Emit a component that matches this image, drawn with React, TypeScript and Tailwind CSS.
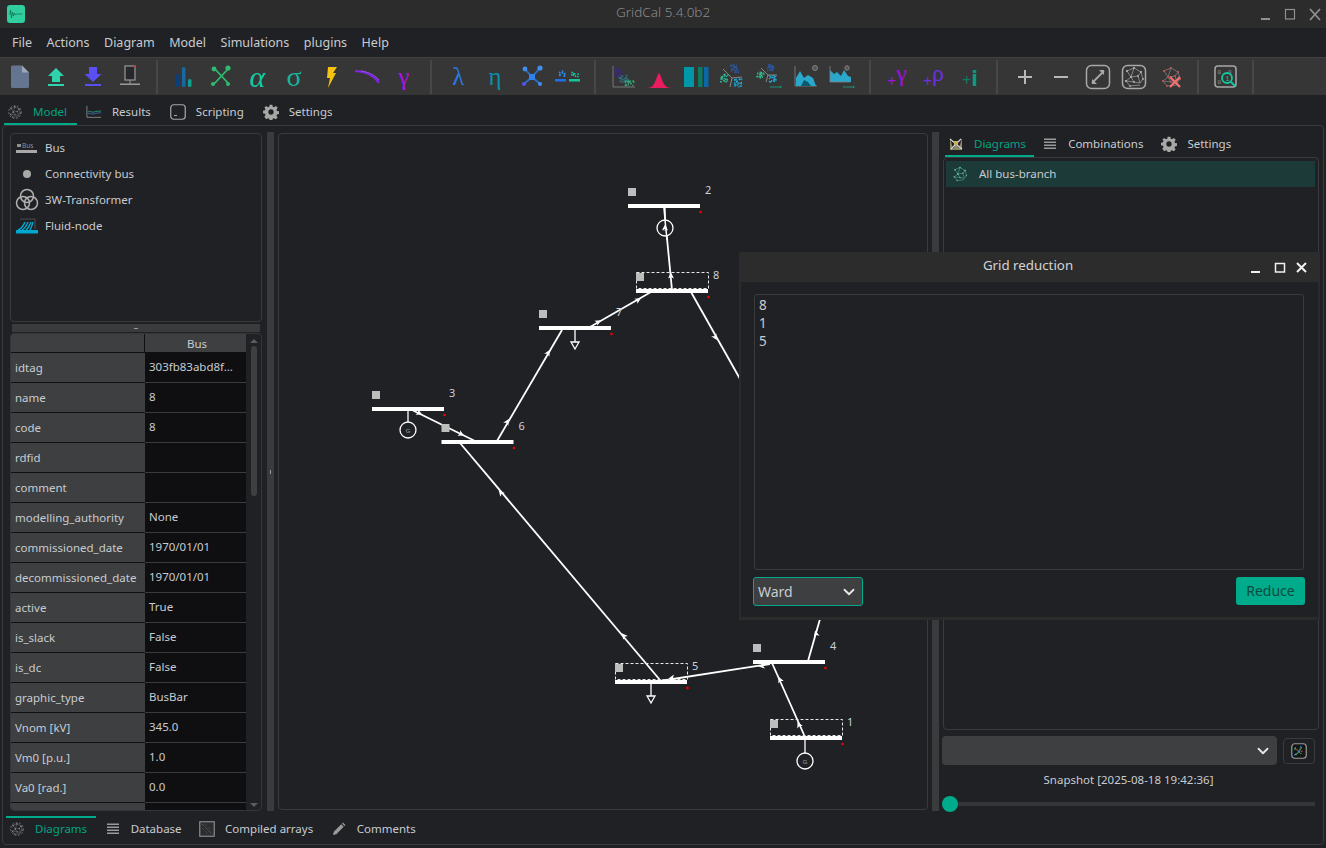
import type { ReactNode } from 'react'
import { ChevronDown } from 'lucide-react'

const TEAL = '#00ab8b'

// deterministic speckle so the scatter icons stay the same between runs
function speck(n: number, x: number, y: number, w: number, h: number, seed: number) {
  const out: [number, number][] = []
  let s = seed
  for (let i = 0; i < n; i++) {
    s = (s * 9301 + 49297) % 233280
    const a = s / 233280
    s = (s * 9301 + 49297) % 233280
    const b = s / 233280
    out.push([x + a * w, y + b * h])
  }
  return out
}

function Speck({ n, x, y, w, h, seed, color, r = 0.7 }: { n: number; x: number; y: number; w: number; h: number; seed: number; color: string; r?: number }) {
  return (
    <g fill={color}>
      {speck(n, x, y, w, h, seed).map(([a, b], i) => (
        <circle key={i} cx={a} cy={b} r={r} />
      ))}
    </g>
  )
}

function Ico({ children, size = 28 }: { children: ReactNode; size?: number }) {
  return (
    <svg width={size} height={size} viewBox="0 0 28 28" fill="none" aria-hidden="true">
      {children}
    </svg>
  )
}

const NET: [number, number, number, number][] = [
  [7, 8, 14, 5], [14, 5, 21, 9], [7, 8, 11, 14], [11, 14, 18, 13], [21, 9, 18, 13],
  [21, 9, 23, 16], [18, 13, 20, 20], [11, 14, 6, 18], [6, 18, 10, 23], [10, 23, 20, 22], [23, 16, 20, 20],
  [14, 5, 11, 14], [11, 14, 14, 19], [14, 19, 20, 20], [6, 18, 14, 19],
]

function Net({ color, dot }: { color: string; dot?: string }) {
  return (
    <g>
      {NET.map(([a, b, c, d], i) => (
        <line key={i} x1={a} y1={b} x2={c} y2={d} stroke={color} strokeWidth={0.7} />
      ))}
      {NET.map(([a, b], i) => (
        <circle key={i} cx={a} cy={b} r={1} fill={dot ?? color} />
      ))}
    </g>
  )
}

function Greek({ ch, color, size = 25, italic }: { ch: string; color: string; size?: number; italic?: boolean }) {
  return (
    <span className={`font-['Liberation_Serif',serif] leading-none ${italic ? 'italic' : ''}`} style={{ color, fontSize: size }}>
      {ch}
    </span>
  )
}

function PlusGreek({ ch, color }: { ch: string; color: string }) {
  return (
    <span className="flex items-end leading-none" style={{ color }}>
      <span className="text-[16px] font-['Noto_Sans',sans-serif] leading-none">+</span>
      <span className="text-[24px] font-['Liberation_Serif',serif] leading-none -mt-1 mb-[4px]">{ch}</span>
    </span>
  )
}

const FILE_ICONS: ReactNode[] = [
  <Ico key="new"><path d="M5 4a1.5 1.5 0 0 1 1.5-1.5H16l7 7v14a1.5 1.5 0 0 1-1.5 1.5h-15A1.5 1.5 0 0 1 5 24z" fill="#66758f" /><path d="M16 2.500v7h7z" fill="#9aa6ba" /></Ico>,
  <Ico key="open"><path d="M14 5l8 8h-4v6h-8v-6H6z" fill="#2fd3ab" /><rect x="6" y="21" width="16" height="2" fill="#2fd3ab" /></Ico>,
  <Ico key="save"><path d="M10 4h8v7h4.500L14 19 5.500 11H10z" fill="#5a4ff2" /><rect x="6" y="21" width="16" height="2" fill="#5a4ff2" /></Ico>,
  <Ico key="device"><rect x="9" y="3" width="10" height="14" fill="#26282b" stroke="#9a9a9a" strokeWidth="1.200" /><circle cx="18.500" cy="3.500" r="0.800" fill="#e02020" /><line x1="14" y1="17" x2="14" y2="21" stroke="#9a9a9a" /><rect x="4" y="20.500" width="20" height="1.500" fill="#9a9a9a" /></Ico>,
]

const SIM_ICONS: ReactNode[] = [
  <Ico key="bars"><rect x="6" y="11" width="3.500" height="13" rx="1.500" fill="#0c3f78" /><rect x="12" y="4" width="3.500" height="20" rx="1.500" fill="#1769a3" /><rect x="18" y="16" width="3.500" height="8" rx="1.500" fill="#0d9f92" /></Ico>,
  <Ico key="x"><path d="M7 5l14 15M21 6L7 21" stroke="#2fbc72" strokeWidth="1.800" /><circle cx="7" cy="6" r="2.400" fill="#2fbc72" /><circle cx="21" cy="5" r="2.600" fill="#2fbc72" /><circle cx="6" cy="21" r="2" fill="#2fbc72" /><circle cx="21" cy="21" r="2" fill="#2fbc72" /></Ico>,
  <Greek key="a" ch="α" color="#11cba6" size={30} italic />,
  <Greek key="s" ch="σ" color="#19b39b" size={28} />,
  <Ico key="bolt"><path d="M11 4h9l-4 6h3L11 25l2-10h-3z" fill="#f5c211" /></Ico>,
  <Ico key="curve"><path d="M2 8c10 0 18 4 24 12" stroke="#8d1fe6" strokeWidth="1.800" /><path d="M4 8c9 1 17 5 22 10" stroke="#6b2fe0" strokeWidth="1.200" /><path d="M8 8c8 1 15 5 18 9" stroke="#a04be8" strokeWidth="1" /></Ico>,
  <Greek key="g" ch="γ" color="#b112e4" />,
]

const GREEK_ICONS: ReactNode[] = [
  <Greek key="l" ch="λ" color="#2a78e4" />,
  <Greek key="e" ch="η" color="#0a8eab" />,
  <Ico key="blue"><path d="M7 6l7 8 8-9M14 14l-8 7M14 14l8 7" stroke="#2a70c8" strokeWidth="1.800" /><circle cx="7" cy="6" r="2.400" fill="#3f8ff0" /><circle cx="22" cy="5" r="2.600" fill="#3f8ff0" /><circle cx="6" cy="21" r="2" fill="#5a50f0" /><circle cx="22" cy="21" r="2" fill="#3f8ff0" /><rect x="11" y="11" width="6" height="6" fill="#2f80e8" /></Ico>,
  <Ico key="dots"><rect x="1" y="16" width="11" height="2.500" fill="#1f6fe8" /><rect x="15" y="16" width="11" height="2.500" fill="#14c79a" /><Speck n={9} x={3} y={8} w={8} h={7} seed={3} color="#2f8df0" r={0.9} /><Speck n={8} x={16} y={8} w={9} h={7} seed={8} color="#14c79a" r={0.9} /></Ico>,
]

const STUDY_ICONS: ReactNode[] = [
  <Ico key="scatter"><path d="M4 3v21h22" stroke="#808080" strokeWidth="0.900" /><Speck n={30} x={5} y={5} w={8} h={9} seed={5} color="#3d2a85" r={0.8} /><Speck n={30} x={10} y={12} w={9} h={8} seed={11} color="#2e6f7e" r={0.8} /><Speck n={24} x={16} y={17} w={9} h={6} seed={17} color="#3aa276" r={0.8} /></Ico>,
  <Ico key="gauss"><g fill="#7a1f3f">{[4, 10, 16, 22].map((x) => [5, 10, 15].map((y) => <circle key={`${x}-${y}`} cx={x} cy={y} r={0.6} />))}</g><path d="M1 25c4 0 6-1 8-4 2-3 3-9 5-11 2 2 3 8 5 11 2 3 4 4 8 4z" fill="#e81c5f" /></Ico>,
  <Ico key="tbars"><rect x="2" y="4" width="10" height="20" fill="#0097a8" /><rect x="16" y="4" width="4.500" height="20" fill="#0a7d60" /><rect x="22" y="4" width="4.500" height="20" fill="#0a67a8" /></Ico>,
  <Ico key="clusters"><path d="M14 15L5 6M14 15l10-1M14 15l-2 9" stroke="#909090" strokeWidth="0.900" /><Speck n={26} x={13} y={2} w={8} h={8} seed={4} color="#2b5aa8" r={0.8} /><Speck n={26} x={2} y={11} w={8} h={8} seed={9} color="#2fb98f" r={0.8} /><Speck n={26} x={16} y={16} w={8} h={8} seed={13} color="#1ea7d8" r={0.8} /></Ico>,
  <Ico key="clusters2"><path d="M13 12L6 5M13 12l9 0M13 12l-2 7" stroke="#909090" strokeWidth="0.900" /><Speck n={22} x={12} y={2} w={7} h={6} seed={6} color="#2b5aa8" r={0.8} /><Speck n={22} x={2} y={9} w={7} h={6} seed={10} color="#2fb98f" r={0.8} /><Speck n={22} x={14} y={12} w={7} h={7} seed={14} color="#1ea7d8" r={0.8} /><path d="M15 24h10" stroke="#1f8f70" strokeWidth="1" /><path d="M25 22.500l2 1.500-2 1.500z" fill="#1f8f70" /></Ico>,
  <Ico key="hills"><path d="M3 3v20h22" stroke="#808080" strokeWidth="0.900" /><path d="M4 23v-8l4-7 4 7 4-3 5 3 3 8z" fill="#2aa8cc" /><path d="M9 23l3-6 4 2 3 4z" fill="#0a5a6e" /><circle cx="23" cy="5" r="2.500" stroke="#808080" strokeWidth="1" fill="#555" /></Ico>,
  <Ico key="hills2"><path d="M2 19V7l4 4 3-2 4 4 3-6 4 6 3 1v5z" fill="#2aa8cc" /><path d="M2 3v16h20" stroke="#808080" strokeWidth="0.800" /><circle cx="19" cy="5" r="2.200" stroke="#808080" strokeWidth="1" fill="#555" /><path d="M15 24h10" stroke="#1f8f70" strokeWidth="1" /><path d="M25 22.500l2 1.500-2 1.500z" fill="#1f8f70" /></Ico>,
]

const ADD_ICONS: ReactNode[] = [
  <PlusGreek key="pg" ch="γ" color="#a010d8" />,
  <PlusGreek key="pr" ch="ρ" color="#6b2fe0" />,
  <span key="pi" className="flex items-end leading-none text-[#0a7d60]">
    <span className="text-[16px] font-['Noto_Sans',sans-serif] leading-none">+</span>
    <span className="text-[22px] font-bold text-[#0a9d7c] font-['Noto_Sans',sans-serif] leading-none">i</span>
  </span>,
]

const VIEW_ICONS: ReactNode[] = [
  <Ico key="plus"><path d="M14 7v14M7 14h14" stroke="#b8b8b8" strokeWidth="2" /></Ico>,
  <Ico key="minus"><path d="M7 14h14" stroke="#b8b8b8" strokeWidth="2" /></Ico>,
  <Ico key="expand"><rect x="2.500" y="2.500" width="23" height="23" rx="5" stroke="#a8a8a8" strokeWidth="1.500" /><path d="M8 20L20 8" stroke="#a8a8a8" strokeWidth="1.800" /><path d="M20 7v5l-5-5zM8 21v-5l5 5z" fill="#a8a8a8" /></Ico>,
  <Ico key="netbox"><rect x="2.500" y="2.500" width="23" height="23" rx="5" stroke="#a8a8a8" strokeWidth="1.500" /><Net color="#a8a8a8" /></Ico>,
  <Ico key="netx"><Net color="#8a8a8a" dot="#c05050" /><path d="M13 14l10 10M23 14L13 24" stroke="#f07070" strokeWidth="2.400" /></Ico>,
]

function Sep() {
  return <div className="w-[2px] h-[34px] bg-[#464748] mx-[8px]" />
}

function TbBtn({ children }: { children: ReactNode }) {
  return <div className="w-[36.600px] h-[37px] flex items-center justify-center shrink-0">{children}</div>
}

function Toolbar() {
  const groups = [FILE_ICONS, SIM_ICONS, GREEK_ICONS, STUDY_ICONS, ADD_ICONS, VIEW_ICONS]
  return (
    <div className="h-[38px] shrink-0 flex items-center pl-[1.500px] bg-[#363636] border-t border-[#3f4042]">
      {groups.map((g, i) => (
        <div key={i} className="flex items-center">
          <div className="flex">
            {g.map((ic, j) => (
              <TbBtn key={j}>{ic}</TbBtn>
            ))}
          </div>
          <Sep />
        </div>
      ))}
      <TbBtn>
        <Ico>
          <rect x="3" y="3" width="21" height="21" rx="3" stroke="#a8a8a8" strokeWidth="1.500" />
          <text x="5.500" y="11" fontSize="6" fill="#909090" fontFamily="Liberation Mono">0</text>
          <text x="16" y="11" fontSize="6" fill="#909090" fontFamily="Liberation Mono">0</text>
          <text x="5.500" y="21" fontSize="6" fill="#909090" fontFamily="Liberation Mono">0</text>
          <circle cx="15" cy="15" r="5" stroke="#14c7a0" strokeWidth="1.800" />
          <path d="M19 19l4 4" stroke="#14c7a0" strokeWidth="2" />
          <text x="13.500" y="17.500" fontSize="6.500" fill="#14c7a0" fontFamily="Liberation Mono">1</text>
        </Ico>
      </TbBtn>
      <Sep />
    </div>
  )
}

// small icons used on the tab strips
const NetSmall = ({ color = '#8a8a8a' }: { color?: string }) => (
  <svg width="16" height="16" viewBox="0 0 28 28" fill="none" aria-hidden="true">
    <circle cx="14" cy="14" r="11" stroke={color} strokeWidth="1.500" strokeDasharray="3 3" />
    <Net color={color} />
  </svg>
)
const LinesIco = () => (
  <svg width="16" height="16" viewBox="0 0 16 16" aria-hidden="true" fill="#9a9a9a">
    <rect x="2" y="2.500" width="12" height="1.500" />
    <rect x="2" y="5.500" width="12" height="1.500" />
    <rect x="2" y="8.500" width="12" height="1.500" />
    <rect x="2" y="11.500" width="12" height="1.500" />
  </svg>
)
const GearIco = () => (
  <svg width="16" height="16" viewBox="0 0 24 24" aria-hidden="true" fill="#a8a8a8">
    <path fillRule="evenodd" d="M10 1h4l.6 3.100 2 .8L19.300 3l2.800 2.800-1.900 2.700.8 2 3 .5v4l-3 .6-.8 2 1.800 2.600-2.800 2.800-2.700-1.800-2 .8-.5 3h-4l-.6-3-2-.8-2.600 1.800L2 19.200l1.800-2.600-.8-2-3-.6v-4l3-.5.8-2L2 5.800 4.800 3l2.600 1.900 2-.8zM12 8a4 4 0 1 0 0 8 4 4 0 0 0 0-8z" />
  </svg>
)
const ResultsIco = () => (
  <svg width="18" height="16" viewBox="0 0 18 16" fill="none" aria-hidden="true">
    <path d="M1 1v13h16" stroke="#8a8a8a" />
    <path d="M2 8c3-2 4 1 7 0s5-1 8-1" stroke="#2a9d8f" />
    <path d="M2 10c3-1 5 1 8 0s4-1 7-1" stroke="#3a6fa8" />
  </svg>
)
const ScriptIco = () => (
  <svg width="16" height="16" viewBox="0 0 16 16" fill="none" aria-hidden="true">
    <rect x="0.750" y="0.750" width="14.500" height="14.500" rx="3" stroke="#a8a8a8" strokeWidth="1.200" />
    <path d="M4 11.500h3" stroke="#a8a8a8" />
  </svg>
)
const CompiledIco = () => (
  <svg width="16" height="16" viewBox="0 0 16 16" fill="none" aria-hidden="true">
    <rect x="0.750" y="0.750" width="14.500" height="14.500" stroke="#8a8a8a" strokeWidth="1.200" fill="#2c2d2f" />
    <path d="M3 3l10 10" stroke="#707070" strokeDasharray="1 1" />
    <path d="M6 3l7 7M3 7l6 6" stroke="#505050" strokeDasharray="1 1" />
  </svg>
)
const PencilIco = () => (
  <svg width="14" height="14" viewBox="0 0 14 14" aria-hidden="true" fill="#9a9a9a">
    <path d="M1 13l.8-3.300 7.400-7.400 2.500 2.500-7.400 7.400zM10 1.500l1-1 2.500 2.500-1 1z" />
  </svg>
)
const DiagramsIco = () => (
  <svg width="16" height="16" viewBox="0 0 16 16" aria-hidden="true" fill="none">
    <path d="M2 2l3 11 3-5 3 4 3-10v12H2z" fill="#8a8a6a" />
    <path d="M2 3l12 10M13 3L3 13" stroke="#d8d8d8" strokeWidth="1.200" />
    <rect x="6" y="5" width="4" height="4" fill="#c8b060" />
  </svg>
)

function Tab({ icon, label, active, tight }: { icon: ReactNode; label: string; active?: boolean; tight?: boolean }) {
  return (
    <div className={`h-full flex items-center gap-[10px] pl-[3px] ${tight ? 'pr-[8px]' : 'pr-[10px]'} border-b-2 ${active ? 'text-[#00a583] border-[#00ab8b]' : 'border-transparent'}`}>
      <span className="w-[16px] flex justify-center">{icon}</span>
      <span>{label}</span>
    </div>
  )
}

const PROPS: [string, string][] = [
  ['idtag', '303fb83abd8f…'],
  ['name', '8'],
  ['code', '8'],
  ['rdfid', ''],
  ['comment', ''],
  ['modelling_authority', 'None'],
  ['commissioned_date', '1970/01/01'],
  ['decommissioned_date', '1970/01/01'],
  ['active', 'True'],
  ['is_slack', 'False'],
  ['is_dc', 'False'],
  ['graphic_type', 'BusBar'],
  ['Vnom [kV]', '345.0'],
  ['Vm0 [p.u.]', '1.0'],
  ['Va0 [rad.]', '0.0'],
  ['', ''],
]

function PropTable() {
  return (
    <div className="flex-1 min-h-0 flex border border-[#35363a] rounded-[4px] overflow-hidden">
      <div className="w-[235px] overflow-hidden">
        <div className="h-[19px] flex">
          <div className="w-[134px] bg-[#3e3f40] border-r border-b border-[#101012]" />
          <div className="w-[101px] bg-[#3e3f40] border-b border-[#101012] pt-[1px] pl-[3px] flex items-center justify-center">Bus</div>
        </div>
        {PROPS.map(([k, v], i) => (
          <div key={i} className="h-[30px] flex">
            <div className="w-[134px] bg-[#3e3f40] border-b border-[#101012] pl-[4px] flex items-center">{k}</div>
            <div className="w-[101px] bg-[#0f0f11] border-b border-[#3a3b3c] pl-[4px] pb-[2px] flex items-center">{v}</div>
          </div>
        ))}
      </div>
      <div className="w-[15px] flex flex-col items-center">
        <div className="mt-[5px] w-0 h-0 border-l-[4px] border-r-[4px] border-b-[4px] border-l-transparent border-r-transparent border-b-[#5a5b5c]" />
        <div className="mt-[3px] w-[6px] h-[150px] rounded-[3px] bg-[#3e3f40]" />
        <div className="mt-auto mb-[3px] w-0 h-0 border-l-[4px] border-r-[4px] border-t-[4px] border-l-transparent border-r-transparent border-t-[#5a5b5c]" />
      </div>
    </div>
  )
}

const BUSES = [
  { n: '2', x: 628, y: 204, dashed: false },
  { n: '8', x: 636, y: 289, dashed: true },
  { n: '7', x: 539, y: 326, dashed: false },
  { n: '3', x: 372, y: 407, dashed: false },
  { n: '6', x: 441.500, y: 440, dashed: false },
  { n: '5', x: 615, y: 680, dashed: true },
  { n: '4', x: 753, y: 660, dashed: false },
  { n: '1', x: 770, y: 736, dashed: true },
]

const BRANCHES: [number, number, number, number][] = [
  [664, 207, 672, 290],
  [651, 292, 590, 327],
  [691, 292, 770, 432],
  [562, 330, 497, 441],
  [410, 409, 475, 441],
  [460, 443, 660, 680],
  [660, 681, 770, 664],
  [772, 663, 805, 737],
  [808, 661, 822, 612],
]

const ARROWS: [number, number, number][] = [
  [671, 276, -90], [665, 228, -90], [638, 300, -30], [598, 322, -30], [715, 337, 60],
  [548, 353, -60], [507, 422, -60], [419, 413, 25], [461, 434, 25], [501, 493, -130], [624, 636, -130],
  [672, 678, 170], [762, 666, 170], [780, 680, -115], [799, 725, -115], [816, 634, -105],
]

function Gen({ x, y }: { x: number; y: number }) {
  return (
    <g>
      <circle cx={x} cy={y} r={8} stroke="#fff" strokeWidth={1.300} fill="#202124" />
      <text x={x} y={y + 2.500} textAnchor="middle" fontSize="6" fill="#a0a8a8" fontFamily="Liberation Sans">G</text>
    </g>
  )
}

function Load({ x, y }: { x: number; y: number }) {
  return <path d={`M${x} ${y}v12M${x - 4} ${y + 12}h8l-4 7z`} stroke="#fff" strokeWidth={1.300} fill="none" />
}

function Canvas() {
  return (
    <div className="w-[650px] mb-[1px] border border-[#3a3b3d] rounded-[4px] overflow-hidden">
      <svg className="block w-full h-full" viewBox="279 134 648 675" fill="none">
        {BRANCHES.map(([a, b, c, d], i) => (
          <line key={i} x1={a} y1={b} x2={c} y2={d} stroke="#fff" strokeWidth={1.800} />
        ))}
        <line x1={665} y1={208} x2={665} y2={220} stroke="#fff" strokeWidth={1.300} />
        <line x1={408} y1={411} x2={408} y2={422} stroke="#fff" strokeWidth={1.300} />
        <line x1={805} y1={740} x2={805} y2={753} stroke="#fff" strokeWidth={1.300} />
        <Gen x={665} y={228} />
        <line x1={665} y1={220} x2={667} y2={240} stroke="#fff" strokeWidth={1.500} />
        <Gen x={408} y={430} />
        <Gen x={805} y={761} />
        <Load x={575} y={330} />
        <Load x={651} y={684} />
        {BUSES.map((b) => (
          <g key={b.n}>
            {b.dashed && <rect x={b.x + 0.500} y={b.y - 16.500} width={72} height={16} stroke="#e8e8e8" strokeDasharray="3 2" strokeWidth={1} />}
            <rect x={b.x} y={b.y} width={72} height={4} fill="#fff" />
            <rect x={b.x} y={b.y - 16} width={8} height={8} fill="#bdbdbd" />
            <circle cx={b.x + 72.500} cy={b.y + 8} r={1.300} fill="#f00000" />
            <text x={b.x + 77} y={b.y - 10} fontSize="11" fill="#c8d0dc" fontFamily="Noto Sans">{b.n}</text>
          </g>
        ))}
        {ARROWS.map(([x, y, r], i) => (
          <path key={i} d="M3.500 0L-2.500 -3L-1 0L-2.500 3z" fill="#fff" transform={`translate(${x} ${y}) rotate(${r})`} />
        ))}
      </svg>
    </div>
  )
}

function GridReductionDialog() {
  return (
    <div className="absolute left-[739px] top-[252px] w-[581px] h-[368px] flex flex-col bg-[#202124] border-x-[2px] border-b-[3px] border-[#2a2b2b]">
      <div className="h-[30px] shrink-0 -mx-[2px] pb-[2px] pr-[3px] bg-[#2c2c2c] flex items-center relative">
        <span className="w-full text-center text-[13.300px] text-[#d4d4d4]">Grid reduction</span>
        <svg className="absolute right-[13px] top-[10px]" width="56" height="12" viewBox="0 0 56 12" fill="none" aria-hidden="true">
          <path d="M0 10h9" stroke="#f0f0f0" strokeWidth="2" />
          <rect x="24.500" y="1.500" width="9" height="8.500" stroke="#f0f0f0" strokeWidth="1.500" />
          <path d="M46 1l9 9M55 1l-9 9" stroke="#f0f0f0" strokeWidth="2" />
        </svg>
      </div>
      <div className="flex-1 min-h-0 flex flex-col pl-[13px] pr-[14px] pt-[12px] pb-[11px] gap-[7px]">
        <div className="flex-1 border border-[#3a3b3d] rounded-[3px] px-[4px] pt-[1px] text-[13.500px] leading-[18px]">
          <div>8</div>
          <div>1</div>
          <div>5</div>
        </div>
        <div className="flex items-start justify-between -ml-[1px] -mr-[1px]">
          <div className="w-[110px] h-[29px] rounded-[3px] bg-[#3e3f40] border border-[#00ab8b] flex items-center justify-between pl-[4px] pr-[4px] text-[14px]">
            <span>Ward</span>
            <ChevronDown size={18} strokeWidth={2.400} color="#e8e8e8" />
          </div>
          <div className="w-[69px] h-[28px] rounded-[3px] bg-[#00ab8b] pb-[1px] flex items-center justify-center text-[14px] text-[#0e4a3f]">Reduce</div>
        </div>
      </div>
    </div>
  )
}

export default function App() {
  return (
    <div className="relative w-[1326px] h-[848px] flex flex-col overflow-hidden bg-[#202124] text-[#c8ccd2] text-[11.500px] font-['Noto_Sans',sans-serif]">
      {/* Window title */}
      <div className="h-[28px] shrink-0 bg-[#2c2c2c] flex items-center px-[7px] relative">
        <svg width="18" height="18" viewBox="0 0 18 18" aria-hidden="true">
          <rect width="18" height="18" rx="3" fill="#2fcf9f" />
          <path d="M2 9h1l.5-4 1 8 1-6 1 4 1-3 1 2 1-1h6" stroke="#176650" strokeWidth="0.700" fill="none" />
        </svg>
        <span className="ml-[591px] pb-[3px] text-[13.500px] text-[#8a8a8a] font-light">GridCal 5.4.0b2</span>
        <svg className="absolute right-[5px] top-[8px]" width="60" height="13" viewBox="0 0 60 13" fill="none" aria-hidden="true">
          <path d="M0 11h9" stroke="#8f8f8f" strokeWidth="2" />
          <rect x="24.500" y="1.500" width="9" height="9.500" stroke="#8f8f8f" strokeWidth="1.200" />
          <path d="M49 1l10 11M59 1L49 12" stroke="#8f8f8f" strokeWidth="1.800" />
        </svg>
      </div>

      {/* Menu bar */}
      <div className="h-[29px] shrink-0 flex items-center gap-[14.500px] pl-[12px] pt-[1px] text-[12.500px]">
        {['File', 'Actions', 'Diagram', 'Model', 'Simulations', 'plugins', 'Help'].map((m) => (
          <span key={m}>{m}</span>
        ))}
      </div>

      <Toolbar />

      {/* Main tabs */}
      <div className="h-[30px] shrink-0 flex items-stretch gap-[6px] pl-[4px] pt-[5px]">
        <Tab icon={<NetSmall />} label="Model" active />
        <Tab icon={<ResultsIco />} label="Results" />
        <Tab icon={<ScriptIco />} label="Scripting" />
        <Tab icon={<GearIco />} label="Settings" />
      </div>

      {/* Main panel */}
      <div className="flex-1 min-h-0 mx-[2px] mb-[3px] border border-[#3a3b3d] rounded-[4px] flex flex-col">
        <div className="flex-1 min-h-0 flex pl-[7px] pt-[7px]">
          <div className="w-[252px] flex flex-col">
            <div className="h-[189px] shrink-0 border border-[#3a3b3d] rounded-[4px] pt-[1px]">
              {[
                { label: 'Bus', icon: (
                  <svg width="24" height="14" viewBox="0 0 24 14" aria-hidden="true">
                    <rect x="2" y="3" width="4" height="3" fill="#909090" />
                    <text x="7" y="6.500" fontSize="6.500" fill="#909090" fontFamily="Noto Sans">Bus</text>
                    <rect x="1" y="9" width="21" height="3" fill="#a8a8a8" />
                  </svg>
                ) },
                { label: 'Connectivity bus', icon: (
                  <svg width="24" height="14" viewBox="0 0 24 14" aria-hidden="true"><circle cx="12" cy="7" r="4" fill="#a8a8a8" /></svg>
                ) },
                { label: '3W-Transformer', icon: (
                  <svg width="24" height="24" viewBox="0 0 24 24" fill="none" stroke="#b0b0b0" strokeWidth="1.500" aria-hidden="true">
                    <circle cx="12" cy="8" r="6.500" /><circle cx="8" cy="15" r="6.500" /><circle cx="16" cy="15" r="6.500" />
                  </svg>
                ) },
                { label: 'Fluid-node', icon: (
                  <svg width="24" height="18" viewBox="0 0 24 18" fill="none" aria-hidden="true">
                    <path d="M5 2h15v10" stroke="#55585c" strokeWidth="0.800" />
                    <path d="M3 13c4-1 5-4 7-8M7 13c3-1 4-4 6-8M11 13c2-1 3-4 5-8M15 13c1-2 2-4 3-8" stroke="#00a8d0" strokeWidth="1.400" />
                    <rect x="1" y="13" width="22" height="3.500" fill="#00a8d0" />
                  </svg>
                ) },
              ].map((row) => (
                <div key={row.label} className="h-[26px] flex items-center">
                  <span className="w-[34px] pr-[2px] flex justify-center">{row.icon}</span>
                  <span>{row.label}</span>
                </div>
              ))}
            </div>
            <div className="h-[8px] shrink-0 mx-[2px] mt-[2px] mb-[1px] bg-[#3a3b3c] flex justify-center items-center">
              <div className="w-[4px] h-[1px] bg-[#9a9a9a]" />
            </div>
            <PropTable />
          </div>

          <div className="w-[7px] ml-[5px] mr-[4px] -mt-[1px] bg-[#3a3b3c] flex items-center justify-center">
            <div className="w-[1px] h-[4px] bg-[#9a9a9a]" />
          </div>

          <Canvas />

          <div className="w-[7px] ml-[4px] -mt-[1px] bg-[#3a3b3c]" />

          <div className="w-[376px] ml-[4px] -mt-[6px] flex flex-col">
            <div className="h-[30px] shrink-0 flex items-stretch gap-[5px] pl-[2px] pt-[6px]">
              <Tab icon={<DiagramsIco />} label="Diagrams" active tight />
              <Tab icon={<LinesIco />} label="Combinations" />
              <Tab icon={<GearIco />} label="Settings" />
            </div>
            <div className="h-[573px] shrink-0 border border-[#3a3b3d] rounded-[4px] pl-[2px] pr-[3px] py-[3px]">
              <div className="h-[26px] bg-[#1b3a38] flex items-center gap-[9px] pl-[4px]">
                <svg width="20" height="20" viewBox="0 0 28 28" fill="none" aria-hidden="true"><Net color="#5fb5a0" /></svg>
                <span>All bus-branch</span>
              </div>
            </div>
            <div className="flex items-center gap-[6px] mt-[6px] -ml-[1px] pr-[4px]">
              <div className="flex-1 h-[29px] bg-[#3e3f40] rounded-[4px] flex justify-end items-center pr-[5px]">
                <ChevronDown size={18} strokeWidth={2.400} color="#e8e8e8" />
              </div>
              <div className="w-[32px] h-[26px] border border-[#3a3b3d] rounded-[4px] flex items-center justify-center">
                <svg width="16" height="16" viewBox="0 0 16 16" fill="none" aria-hidden="true">
                  <rect x="0.750" y="0.750" width="14.500" height="14.500" rx="3" stroke="#9a9a9a" strokeWidth="1.200" fill="#161618" />
                  <Speck n={7} x={3} y={3} w={10} h={10} seed={2} color="#e05a20" r={0.7} />
                  <Speck n={7} x={3} y={3} w={10} h={10} seed={7} color="#2a8de0" r={0.7} />
                  <Speck n={7} x={3} y={3} w={10} h={10} seed={12} color="#3fc050" r={0.7} />
                </svg>
              </div>
            </div>
            <div className="mt-[6px] text-center pr-[5px]">Snapshot [2025-08-18 19:42:36]</div>
            <div className="relative h-[16px] mt-[8px] -ml-[1px] mr-[4px] flex items-center">
              <div className="w-full h-[4px] bg-[#343536]" />
              <div className="absolute left-0 top-0 w-[16px] h-[16px] rounded-full" style={{ backgroundColor: TEAL }} />
            </div>
          </div>
        </div>

        {/* Bottom tabs */}
        <div className="h-[24px] mt-[5px] mb-[4px] shrink-0 flex gap-[5.500px] pl-[3px]">
          <div className="h-full flex items-center gap-[10px] pl-[3px] pr-[9px] border-t-2 text-[#00a583] border-[#00ab8b]"><span className="w-[16px] flex justify-center"><NetSmall /></span>Diagrams</div>
          {[
            { label: 'Database', icon: <LinesIco /> },
            { label: 'Compiled arrays', icon: <CompiledIco /> },
            { label: 'Comments', icon: <PencilIco /> },
          ].map((t) => (
            <div key={t.label} className="h-full flex items-center gap-[10px] pl-[3px] pr-[9px] border-t-2 border-transparent"><span className="w-[16px] flex justify-center">{t.icon}</span>{t.label}</div>
          ))}
        </div>
      </div>

      <GridReductionDialog />
    </div>
  )
}
